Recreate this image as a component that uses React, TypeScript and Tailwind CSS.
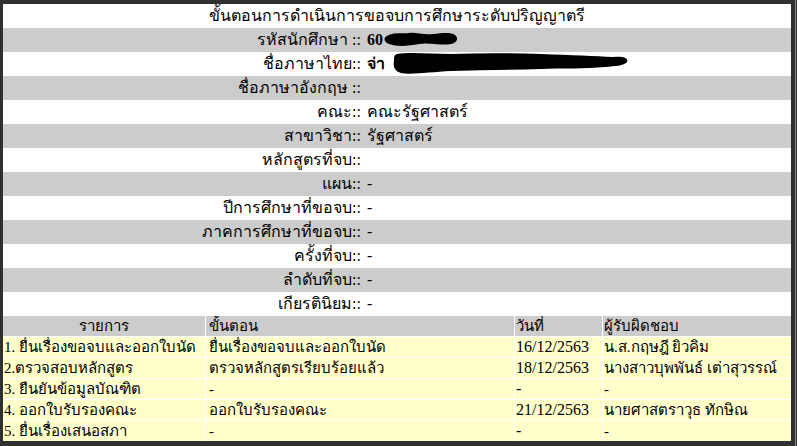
import React from "react";

const info: { label: string; value: string; bold?: boolean; gray: boolean }[] = [
  { label: "รหัสนักศึกษา ::", value: "60", bold: true, gray: true },
  { label: "ชื่อภาษาไทย::", value: "จ่า", bold: true, gray: false },
  { label: "ชื่อภาษาอังกฤษ ::", value: "", gray: true },
  { label: "คณะ::", value: "คณะรัฐศาสตร์", gray: false },
  { label: "สาขาวิชา::", value: "รัฐศาสตร์", gray: true },
  { label: "หลักสูตรที่จบ::", value: "", gray: false },
  { label: "แผน::", value: "-", gray: true },
  { label: "ปีการศึกษาที่ขอจบ::", value: "-", gray: false },
  { label: "ภาคการศึกษาที่ขอจบ::", value: "-", gray: true },
  { label: "ครั้งที่จบ::", value: "-", gray: false },
  { label: "ลำดับที่จบ::", value: "-", gray: true },
  { label: "เกียรตินิยม::", value: "-", gray: false },
];

const steps = [
  ["1. ยื่นเรื่องขอจบและออกใบนัด", "ยื่นเรื่องขอจบและออกใบนัด", "16/12/2563", "น.ส.กฤษฎี ยิวคิม"],
  ["2.ตรวจสอบหลักสูตร", "ตรวจหลักสูตรเรียบร้อยแล้ว", "18/12/2563", "นางสาวบุพพันธ์ เต่าสุวรรณ์"],
  ["3. ยืนยันข้อมูลบัณฑิต", "-", "-", "-"],
  ["4. ออกใบรับรองคณะ", "ออกใบรับรองคณะ", "21/12/2563", "นายศาสตราวุธ ทักษิณ"],
  ["5. ยื่นเรื่องเสนอสภา", "-", "-", "-"],
];

export default function App() {
  return (
    <div
      className="relative w-[797px] h-[446px] overflow-hidden bg-[#303030] pl-[3px] pt-[4px] pr-[6px] pb-[5px] text-black text-[16px] leading-[20px]"
      style={{ fontFamily: '"Liberation Serif", "Noto Sans", "DejaVu Sans", serif' }}
    >
      <div className="absolute right-[1px] top-0 bottom-0 w-[1px] bg-[#8a8a8a]" />
      <div className="h-full w-full bg-white overflow-hidden">
        <div className="h-[24px] flex items-center justify-center">
          ขั้นตอนการดำเนินการขอจบการศึกษาระดับปริญญาตรี
        </div>
        {info.map((r, i) => (
          <div
            key={i}
            className={`relative h-[24px] flex items-center ${r.gray ? "bg-[#cccccc]" : "bg-white"}`}
          >
            <div className="w-[358px] text-right whitespace-nowrap">{r.label}</div>
            <div className={`pl-[2px] whitespace-nowrap ${r.bold ? "font-bold" : ""}`}>
              {r.value ? "\u00a0" + r.value : ""}
            </div>
            {i === 0 && (
              <svg className="absolute left-[380px] top-[2px]" width="76" height="18" viewBox="0 0 76 18">
                <path
                  d="M4 6 C10 2 20 4 26 3 C32 2 40 5 50 4 C60 3 68 2 72 5 C76 8 74 13 68 14 C58 16 46 12 36 14 C26 16 14 17 6 14 C1 12 0 8 4 6 Z"
                  fill="#000"
                />
              </svg>
            )}
            {i === 1 && (
              <svg className="absolute left-[388px] top-[-2px]" width="240" height="26" viewBox="0 0 240 26">
                <path
                  d="M6 4 C20 2 40 4 60 4 C90 3 120 3 150 4 C180 5 205 6 222 7 C232 6 238 8 236 12 C233 16 224 16 214 17 C195 19 170 18 150 19 C120 20 90 20 60 21 C40 22 20 25 10 23 C3 21 2 16 3 11 C3 7 3 5 6 4 Z"
                  fill="#000"
                />
              </svg>
            )}
          </div>
        ))}
        <table className="table-fixed border-separate border-spacing-[1px] -mt-[1px] -ml-[1px] w-[790px] text-[15px]">
          <colgroup>
            <col className="w-[202px]" />
            <col className="w-[308px]" />
            <col className="w-[87px]" />
            <col />
          </colgroup>
          <thead>
            <tr className="bg-[#cccccc] h-[20px]">
              <th className="font-normal text-center p-0 px-[1px] leading-[20px]">รายการ</th>
              <th className="font-normal text-left p-0 pl-[3px] leading-[20px]">ขั้นตอน</th>
              <th className="font-normal text-left p-0 pl-[1px] leading-[20px]">วันที่</th>
              <th className="font-normal text-left p-0 pl-[1px] leading-[20px]">ผู้รับผิดชอบ</th>
            </tr>
          </thead>
          <tbody>
            {steps.map((s, i) => (
              <tr key={i} className="bg-[#ffffcc] h-[20px]">
                {s.map((c, j) => (
                  <td
                    key={j}
                    className={`p-0 leading-[20px] whitespace-nowrap ${j === 1 ? "pl-[3px]" : "pl-[1px]"} ${j === 2 ? "text-[16px]" : ""}`}
                  >
                    {c}
                  </td>
                ))}
              </tr>
            ))}
          </tbody>
        </table>
      </div>
    </div>
  );
}
